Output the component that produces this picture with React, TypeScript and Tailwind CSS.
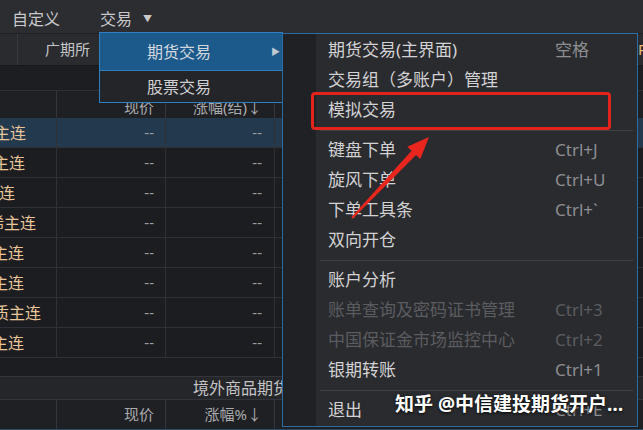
import React from "react"

const rows = [
  { name: "菜粕主连", w: "w-[26px]", on: true },
  { name: "棕榈主连", w: "w-[25px]" },
  { name: "豆一连", w: "w-[15px]" },
  { name: "苯乙烯主连", w: "w-[36px]" },
  { name: "纸浆主连", w: "w-[24px]" },
  { name: "玻璃主连", w: "w-[24px]" },
  { name: "硅铁质主连", w: "w-[41px]" },
  { name: "尿素主连", w: "w-[24px]" },
]

type Item = { label?: string; key?: string; dim?: boolean; sep?: boolean }

const menu: Item[] = [
  { label: "期货交易(主界面)", key: "空格" },
  { label: "交易组（多账户）管理" },
  { label: "模拟交易" },
  { sep: true },
  { label: "键盘下单", key: "Ctrl+J" },
  { label: "旋风下单", key: "Ctrl+U" },
  { label: "下单工具条", key: "Ctrl+`" },
  { label: "双向开仓" },
  { sep: true },
  { label: "账户分析" },
  { label: "账单查询及密码证书管理", key: "Ctrl+3", dim: true },
  { label: "中国保证金市场监控中心", key: "Ctrl+2", dim: true },
  { label: "银期转账", key: "Ctrl+1" },
  { sep: true },
  { label: "退出", key: "Ctrl+E" },
]

function ColHead({ a, b }: { a: string; b: string }) {
  return (
    <div className="flex h-full text-[15px] text-[#a9aaad]">
      <div className="w-[57px] border-r border-[#34353a]" />
      <div className="w-[109px] border-r border-[#34353a] flex items-center justify-end pr-[11px]">{a}</div>
      <div className="w-[109px] border-r border-[#34353a] flex items-center justify-end pr-[12px]">{b}</div>
      <div className="flex-1" />
    </div>
  )
}

export default function App() {
  return (
    <div className="relative w-[643px] h-[430px] overflow-hidden bg-[#1c1d21] font-['Noto_Sans','Noto_Sans_CJK_SC',sans-serif]">
      {/* top menu bar */}
      <div className="h-[33px] pt-[5px] bg-[#2c2d31] flex items-center text-[16px] text-[#c9c9cb]">
        <span className="ml-[12px]">自定义</span>
        <span className="ml-[40px]">交易</span>
        <span className="ml-[11px] text-[9px]">▼</span>
      </div>

      {/* exchange tab row */}
      <div className="h-[32px] bg-[#2a2b2f] border-t border-[#202124] flex items-center text-[15px] text-[#c4c4c6]">
        <div className="w-[18px] h-full border-r border-[#3a3b3f]" />
        <div className="w-[72px] text-right">广期所</div>
        <div className="flex-1" />
        <span className="text-[#e6b87c] text-[15px] mr-[-4px]">P</span>
      </div>

      <div className="h-[25px] bg-[#1d1e21] border-t border-[#18191b]" />

      {/* column header */}
      <div className="h-[28px] bg-[#1f2024] border-t border-[#2f3034]">
        <div className="flex h-full text-[15px] text-[#a9aaad]">
          <div className="w-[57px] border-r border-[#34353a]" />
          <div className="w-[109px] border-r border-[#34353a] flex items-end justify-end pr-[11px]">现价</div>
          <div className="w-[109px] border-r border-[#34353a] flex items-end justify-end pr-[12px]">涨幅(结)↓</div>
          <div className="flex-1" />
        </div>
      </div>

      {/* rows */}
      {rows.map((r, i) => (
        <div
          key={i}
          className={`h-[30px] flex border-b border-[#303136] text-[16px] ${r.on ? "bg-[#22394e]" : "bg-[#1c1d21]"}`}
        >
          <div className="w-[57px] border-r border-[#303136] flex items-center">
            <div className={`${r.w} overflow-hidden flex justify-end`}>
              <span className="whitespace-nowrap text-[#e9c79b]">{r.name}</span>
            </div>
          </div>
          <div className="w-[109px] border-r border-[#303136] flex items-center justify-end pr-[11px] text-[#9c9da0] text-[15px]">--</div>
          <div className="w-[109px] border-r border-[#303136] flex items-center justify-end pr-[12px] text-[#9c9da0] text-[15px]">--</div>
          <div className="flex-1" />
        </div>
      ))}

      <div className="h-[18px] bg-[#1c1d21]" />

      {/* overseas section */}
      <div className="h-[23px] bg-[#252629] border-t border-[#34353a] flex items-center text-[16px] text-[#c4c4c6]">
        <span className="ml-[193px] whitespace-nowrap">境外商品期货</span>
      </div>
      <div className="h-[30px] bg-[#1f2024] border-t border-[#34353a]">
        <ColHead a="现价" b="涨幅%↓" />
      </div>
      <div className="h-[2px] bg-[#2b4a66]" />

      {/* first level submenu */}
      <div className="absolute left-[99px] top-[32px] w-[184px] h-[71px] border border-[#2f7fc0] bg-[#242529] text-[16px]">
        <div className="h-[38px] bg-[#1c5a8c] border-b border-[#2f7fc0] flex items-center text-[#d2d8de] pl-[47px]">
          <span className="flex-1">期货交易</span>
          <span className="mr-[2px] text-[9px] text-[#c0c8d0]">▶</span>
        </div>
        <div className="h-[31px] flex items-center text-[#cfcfd1] pl-[47px]">股票交易</div>
      </div>

      {/* second level submenu */}
      <div className="absolute left-[282px] top-[33px] w-[356px] h-[394px] border border-[#2d6ba3] bg-[#2a2b2e] flex">
        <div className="w-[33px] bg-[#202124]" />
        <div className="flex-1 pt-[1px]">
          {menu.map((m, i) =>
            m.sep ? (
              <div key={i} className="h-[10px] flex items-center px-[4px]">
                <div className="h-px w-full bg-[#404145]" />
              </div>
            ) : (
              <div key={i} className="h-[30px] flex items-center pl-[12px] text-[17px]">
                <span className={`w-[227px] whitespace-nowrap ${m.dim ? "text-[#5b5c60]" : "text-[#d2d2d4]"}`}>{m.label}</span>
                <span className={m.dim ? "text-[#5b5c60]" : "text-[#8d8e91]"}>{m.key}</span>
              </div>
            )
          )}
        </div>
      </div>

      {/* annotation */}
      <div className="absolute left-[311px] top-[92px] w-[300px] h-[38px] border-[3px] border-[#e3241d] rounded-[4px]" />
      <svg className="absolute left-0 top-0 pointer-events-none" width="643" height="430">
        <polygon
          points="351.3,217.3 411.6,150.8 407.3,146.7 429,137 420.3,159.1 416,155 352.7,218.7"
          fill="#e8261e"
        />
      </svg>

      <div className="absolute left-[395px] top-[390px] text-[19px] font-bold text-white whitespace-nowrap [text-shadow:0_1px_3px_rgba(0,0,0,0.9)]">
        知乎 @中信建投期货开户…
      </div>
    </div>
  )
}
